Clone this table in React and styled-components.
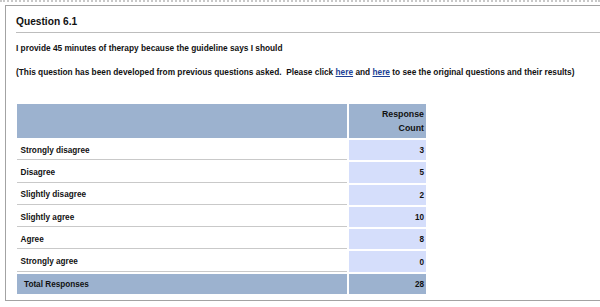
import React from 'react'
import styled, { createGlobalStyle } from 'styled-components'

const GlobalStyle = createGlobalStyle`
  body {
    margin: 0;
    background: #fff;
    font-family: 'Liberation Sans', Arial, sans-serif;
    color: #111;
    overflow: hidden;
  }
`

const TopRule = styled.div`
  border-top: 2px dotted #c8c8c8;
  margin-bottom: 3px;
`

const Panel = styled.section`
  margin-left: 5px;
  width: calc(100% - 5px);
  height: 296px;
  border: 1px solid #a3a3a3;
  border-right: none;
  padding: 10px 0 0 10px;
  box-sizing: border-box;
`

const Title = styled.h2`
  margin: 0;
  font-size: 10.2px;
  line-height: 12px;
  font-weight: bold;
  padding-bottom: 4px;
  border-bottom: 1px solid #bdbdbd;
`

const Text = styled.p`
  margin: ${p => p.$top}px 0 0;
  font-size: 8.3px;
  line-height: 10px;
  font-weight: bold;
  white-space: nowrap;
`

const Link = styled.a`
  color: #1c3f94;
  text-decoration: underline;
`

const Table = styled.div`
  display: grid;
  grid-template-columns: 330px 77px;
  gap: 2px;
  margin: 27px 0 0 1px;
  font-size: 8.2px;
  font-weight: bold;
`

const HeadCell = styled.div`
  height: 34px;
  background: #9cb2cf;
  display: flex;
  flex-direction: column;
  justify-content: center;
  align-items: flex-end;
  padding-right: 2px;
  font-size: 8.8px;
  line-height: 14px;
`

const LabelCell = styled.div`
  height: 20.3px;
  box-sizing: border-box;
  display: flex;
  align-items: center;
  padding: 1px 0 0 ${p => (p.$total ? 7 : 3.5)}px;
  background: ${p => (p.$total ? '#9cb2cf' : '#fff')};
  border-bottom: ${p => (p.$total ? 'none' : '1px solid #c9c9c9')};
`

const CountCell = styled.div`
  height: 20.3px;
  display: flex;
  align-items: center;
  justify-content: flex-end;
  padding: 1px 2px 0 0;
  box-sizing: border-box;
  background: ${p => (p.$total ? '#9cb2cf' : '#d5defb')};
`

const rows = [
  ['Strongly disagree', 3],
  ['Disagree', 5],
  ['Slightly disagree', 2],
  ['Slightly agree', 10],
  ['Agree', 8],
  ['Strongly agree', 0],
]

export default function App() {
  return (
    <>
      <GlobalStyle />
      <TopRule />
      <Panel>
        <Title>Question 6.1</Title>
        <Text $top={10}>I provide 45 minutes of therapy because the guideline says I should</Text>
        <Text $top={14}>
          (This question has been developed from previous questions asked.&nbsp; Please click{' '}
          <Link href="#">here</Link> and <Link href="#">here</Link> to see the original questions and
          their results)
        </Text>
        <Table>
          <HeadCell />
          <HeadCell>
            <span>Response</span>
            <span>Count</span>
          </HeadCell>
          {rows.map(([label, count]) => (
            <React.Fragment key={label}>
              <LabelCell>{label}</LabelCell>
              <CountCell>{count}</CountCell>
            </React.Fragment>
          ))}
          <LabelCell $total>Total Responses</LabelCell>
          <CountCell $total>28</CountCell>
        </Table>
      </Panel>
    </>
  )
}
